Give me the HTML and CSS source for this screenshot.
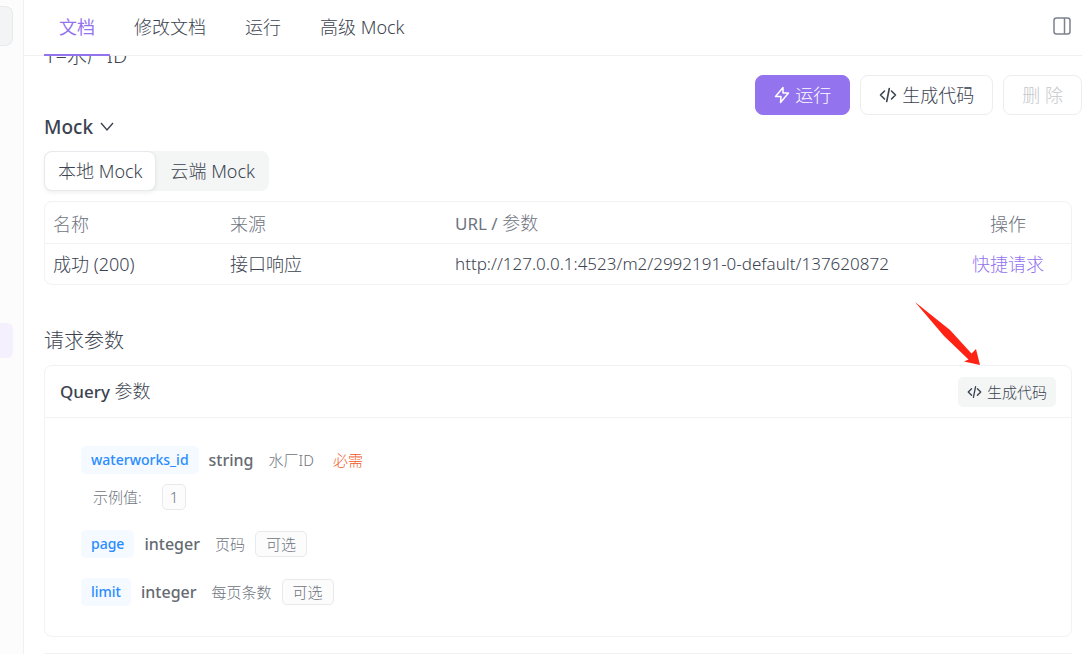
FILE: index.html
```
<!DOCTYPE html>
<html lang="zh-CN">
<head>
    <meta charset="UTF-8">
    <title>接口文档</title>
    <meta name="viewport" content="width=device-width, initial-scale=1">
    <link rel="stylesheet" href="styles.css">
</head>
<body>
    <aside class="sidebar">
        <div class="side-search"></div>
        <div class="side-active"></div>
    </aside>
    <main class="main">
        <header class="topbar">
            <nav class="tabs">
                <a href="#doc" class="tab active">文档</a>
                <a href="#edit" class="tab">修改文档</a>
                <a href="#run" class="tab">运行</a>
                <a href="#mock" class="tab">高级 Mock</a>
            </nav>
            <button type="button" class="panel-toggle" aria-label="侧栏">
                <svg width="18" height="18" viewBox="0 0 18 18" fill="none" stroke="currentColor" stroke-width="1.5">
                    <rect x="1" y="1" width="16" height="16" rx="2.5"/>
                    <path d="M11.5 1v16"/>
                </svg>
            </button>
        </header>

        <p class="desc">1=水厂ID</p>

        <div class="actions">
            <button type="button" class="btn primary">
                <svg width="16" height="18" viewBox="0 0 16 18" fill="none" stroke="currentColor" stroke-width="1.5" stroke-linejoin="round">
                    <path d="M9 1.5 1.5 10.5H7L6.5 16.5 14.5 7H9z"/>
                </svg>
                运行
            </button>
            <button type="button" class="btn">
                <svg width="18" height="16" viewBox="0 0 18 16" fill="none" stroke="currentColor" stroke-width="1.6" stroke-linecap="round" stroke-linejoin="round">
                    <path d="M5.5 4 1.5 8l4 4M12.5 4l4 4-4 4M10.3 1.5 7.7 14.5"/>
                </svg>
                生成代码
            </button>
            <button type="button" class="btn" disabled>删 除</button>
        </div>

        <div class="content">
            <h2 class="mock-title">
                Mock
                <svg width="14" height="10" viewBox="0 0 14 10" fill="none" stroke="currentColor" stroke-width="1.4">
                    <path d="M1 1l6 7 6-7"/>
                </svg>
            </h2>
            <div class="segment">
                <button type="button" class="seg active">本地 Mock</button>
                <button type="button" class="seg">云端 Mock</button>
            </div>

            <table class="mock-table">
                <thead>
                    <tr>
                        <th class="col-name">名称</th>
                        <th class="col-source">来源</th>
                        <th><span class="medium">URL /</span> 参数</th>
                        <th class="col-action">操作</th>
                    </tr>
                </thead>
                <tbody>
                    <tr>
                        <td>成功 (200)</td>
                        <td>接口响应</td>
                        <td class="url">http://127.0.0.1:4523/m2/2992191-0-default/137620872</td>
                        <td class="col-action"><a href="#request">快捷请求</a></td>
                    </tr>
                </tbody>
            </table>

            <section class="params">
                <h2 class="section-title">请求参数</h2>
                <div class="card">
                    <div class="card-head">
                        <h3><span class="semi">Query</span> 参数</h3>
                        <button type="button" class="btn-small">
                            <svg width="15" height="14" viewBox="0 0 18 16" fill="none" stroke="currentColor" stroke-width="1.6" stroke-linecap="round" stroke-linejoin="round">
                                <path d="M5.5 4 1.5 8l4 4M12.5 4l4 4-4 4M10.3 1.5 7.7 14.5"/>
                            </svg>
                            生成代码
                        </button>
                    </div>
                    <div class="card-body">
                        <div class="param">
                            <div class="param-row">
                                <span class="name">waterworks_id</span>
                                <span class="type">string</span>
                                <span class="note">水厂ID</span>
                                <span class="required">必需</span>
                            </div>
                            <div class="example">
                                <span>示例值:</span>
                                <span class="example-value">1</span>
                            </div>
                        </div>
                        <div class="param-row">
                            <span class="name">page</span>
                            <span class="type">integer</span>
                            <span class="note">页码</span>
                            <span class="optional">可选</span>
                        </div>
                        <div class="param-row">
                            <span class="name">limit</span>
                            <span class="type">integer</span>
                            <span class="note">每页条数</span>
                            <span class="optional">可选</span>
                        </div>
                    </div>
                </div>
                <svg class="arrow" width="66" height="64" viewBox="0 0 66 64">
                    <path d="M0 0 35 28 56.5 51.5 61 47 65 63 49 59.5 53.5 57.5 29 34Z" fill="#ff2315"/>
                </svg>
            </section>

            <div class="card next"></div>
        </div>
    </main>
</body>
</html>
```
FILE: styles.css
```
* {
    box-sizing: border-box;
}
body {
    margin: 0;
    height: 100vh;
    overflow: hidden;
    display: flex;
    background: #fff;
    color: #3c4350;
    font-family: "Noto Sans", "Noto Sans CJK SC", sans-serif;
    font-size: 18px;
    font-weight: 300;
    line-height: 24px;
}
h2, h3, p {
    margin: 0;
    font-weight: 300;
}
a {
    color: #9373ee;
    text-decoration: none;
}
button {
    font: inherit;
    color: inherit;
    cursor: pointer;
}
.sidebar {
    width: 24px;
    flex: none;
    padding-top: 6px;
    padding-right: 10px;
    background: #fcfcfc;
    border-right: 1px solid #f0f0f2;
}
.side-search {
    height: 40px;
    background: #f3f4f5;
    border: 1px solid #e8e9eb;
    border-left: none;
    border-radius: 0 8px 8px 0;
}
.side-active {
    height: 35px;
    margin-top: 277px;
    background: #f4f0fd;
    border-radius: 0 6px 6px 0;
}
.main {
    flex: 1;
    min-width: 0;
    display: flex;
    flex-direction: column;
    padding: 0 10px 0 20px;
}
.topbar {
    position: relative;
    z-index: 1;
    flex: none;
    display: flex;
    justify-content: space-between;
    align-items: center;
    height: 56px;
    margin-left: -20px;
    padding-left: 20px;
    background: #fff;
    border-bottom: 1px solid #f0f0f2;
}
.tabs {
    display: flex;
    gap: 9px;
}
.tab {
    height: 56px;
    padding: 0 15px;
    line-height: 54px;
    color: #3c4350;
}
.tab.active {
    color: #9373ee;
    font-weight: 400;
    border-bottom: 2px solid #9373ee;
}
.panel-toggle {
    display: flex;
    margin-right: 11px;
    padding: 0 0 4px;
    border: none;
    background: none;
    color: #7c828d;
}
.desc {
    margin: -12px 0 7px;
    font-size: 20px;
}
.actions {
    display: flex;
    justify-content: flex-end;
    gap: 10px;
}
.btn {
    display: flex;
    align-items: center;
    gap: 5px;
    height: 40px;
    padding: 0 18px;
    background: #fff;
    border: 1px solid #eceded;
    border-radius: 8px;
}
.btn.primary {
    color: #fff;
    background: #9373ee;
    border-color: #9373ee;
}
.btn:disabled {
    color: #c6c8cc;
    cursor: default;
}
.content {
    flex: 1;
    display: flex;
    flex-direction: column;
    margin-right: 10px;
}
.mock-title {
    display: flex;
    align-items: center;
    gap: 7px;
    font-size: 19px;
    font-weight: 500;
}
.segment {
    display: flex;
    align-self: flex-start;
    margin: 12px 0 10px;
    background: #f4f6f6;
    border-radius: 8px;
}
.seg {
    height: 40px;
    padding: 0 13px;
    border: 1px solid transparent;
    border-radius: 8px;
    background: none;
}
.seg.active {
    background: #fff;
    border-color: #e8e9ec;
    box-shadow: 0 2px 4px rgba(0, 0, 0, 0.06);
}
.mock-table {
    width: 100%;
    table-layout: fixed;
    border: 1px solid #f1f2f3;
    border-radius: 8px;
    border-spacing: 0;
}
.mock-table th,
.mock-table td {
    height: 40px;
    padding: 0 8px;
    text-align: left;
    font-weight: 300;
}
.mock-table th {
    height: 42px;
    padding-top: 2px;
    color: #6e7480;
    border-bottom: 1px solid #f1f2f3;
}
.mock-table .col-name {
    width: 177px;
}
.mock-table .col-source {
    width: 225px;
}
.mock-table .col-action {
    width: 126px;
    text-align: center;
}
.mock-table .url {
    font-size: 17px;
}
.medium {
    font-size: 17px;
    font-weight: 400;
}
.params {
    position: relative;
    margin-top: 44px;
}
.section-title {
    margin-bottom: 12px;
    font-size: 20px;
}
.card {
    border: 1px solid #f1f2f3;
    border-radius: 8px;
}
.card-head {
    display: flex;
    justify-content: space-between;
    align-items: center;
    height: 52px;
    padding: 0 15px;
    border-bottom: 1px solid #f1f2f3;
}
.semi {
    font-size: 17px;
    font-weight: 500;
}
.card-head h3 {
    font-size: 18px;
}
.btn-small {
    display: flex;
    align-items: center;
    gap: 5px;
    height: 30px;
    padding: 0 9px;
    border: none;
    border-radius: 5px;
    background: #f4f6f6;
    font-size: 15px;
}
.card-body {
    display: flex;
    flex-direction: column;
    gap: 20px;
    padding: 28px 36px 30px;
    color: #6e7480;
    font-size: 15px;
}
.param-row {
    display: flex;
    align-items: center;
    height: 28px;
}
.name {
    padding: 2px 10px;
    border-radius: 5px;
    background: #f4faff;
    color: #2a8cff;
    font-size: 14px;
    font-weight: 500;
}
.type {
    margin: 0 15px 0 10px;
    color: #666a72;
    font-size: 16px;
    font-weight: 500;
}
.required {
    margin-left: 19px;
    color: #f05a28;
}
.optional,
.example-value {
    margin-left: 10px;
    padding: 0 10px;
    border: 1px solid #e8e9ec;
    border-radius: 5px;
    background: #fcfcfc;
}
.example {
    display: flex;
    align-items: center;
    margin-top: 10px;
    padding-left: 12px;
}
.example-value {
    margin-left: 20px;
    padding: 0 7px;
}
.arrow {
    position: absolute;
    top: -27px;
    right: 91px;
}
.next {
    flex: 1;
    margin-top: 16px;
    border-bottom: none;
    border-radius: 8px 8px 0 0;
}
```
